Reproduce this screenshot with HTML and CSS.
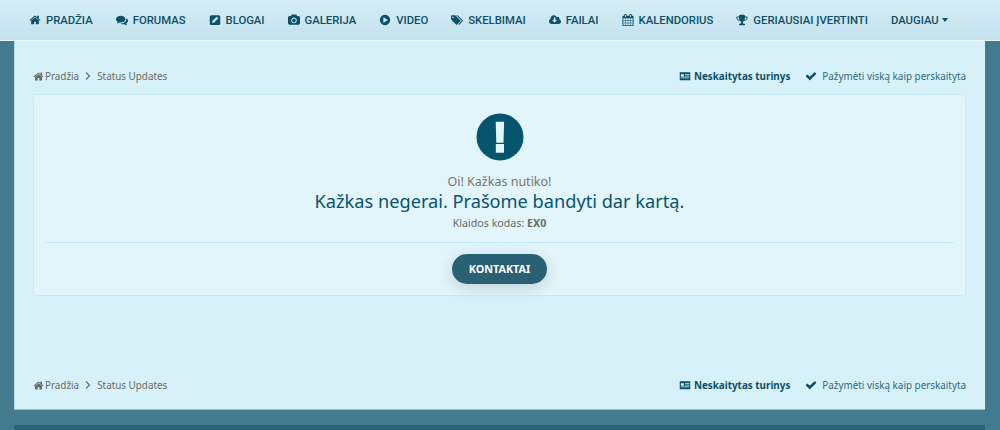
FILE: index.html
```html
<!DOCTYPE html>
<html lang="lt">
<head>
    <meta charset="UTF-8">
    <meta name="viewport" content="width=device-width, initial-scale=1.0">
    <title>Status Updates</title>
    <link rel="stylesheet" href="styles.css">
</head>
<body>

<!-- Main navigation -->
<nav class="nav-bar">
    <a class="nav-item"><svg class="nav-icon" viewBox="0 0 1792 1792"><path d="M1472 992v480q0 26-19 45t-45 19h-384v-384h-256v384h-384q-26 0-45-19t-19-45v-480q0-1 .5-3t.5-3l575-474 575 474q1 2 1 6zm223-69l-62 74q-8 9-21 11h-3q-13 0-21-7l-692-577-692 577q-12 8-24 7-13-2-21-11l-62-74q-8-10-7-23.5t11-21.5l719-599q32-26 76-26t76 26l244 204v-195q0-14 9-23t23-9h192q14 0 23 9t9 23v408l219 182q10 8 11 21.5t-7 23.5z"/></svg>Pradžia</a>
    <a class="nav-item"><svg class="nav-icon" viewBox="0 0 1792 1792"><path d="M1408 768q0 139-94 257t-256.5 186.5-353.5 68.5q-86 0-176-16-124 88-278 128-36 9-86 16h-3q-11 0-20.5-8t-11.5-21q-1-3-1-6.500t.5-6.500 2-6l2.500-5 3.500-5.500 4-5 4.500-5 4-4.500q5-6 23-25t26-29.500 22.500-29 25-38.500 20.500-44q-124-72-195-177t-71-224q0-139 94-257t256.500-186.500 353.500-68.500 353.500 68.500 256.500 186.500 94 257zm384 256q0 120-71 224.500t-195 176.500q10 24 20.500 44t25 38.500 22.500 29 26 29.500 23 25q1 1 4 4.500t4.500 5 4 5 3.500 5.500l2.500 5 2 6 .5 6.500-1 6.500q-3 14-13 22t-22 7q-50-7-86-16-154-40-278-128-90 16-176 16-271 0-472-132 58 4 88 4 161 0 309-45t264-129q125-92 192-212t67-254q0-77-23-152 129 71 204 178t75 230z"/></svg>Forumas</a>
    <a class="nav-item"><svg class="nav-icon" viewBox="0 0 16 16"><path fill-rule="evenodd" d="M3 1.5h10a2 2 0 0 1 2 2v9a2 2 0 0 1-2 2H3a2 2 0 0 1-2-2v-9a2 2 0 0 1 2-2zM4 12l3-.7 5.500-5.500-2.300-2.300L4.700 9z"/></svg>Blogai</a>
    <a class="nav-item"><svg class="nav-icon" viewBox="0 0 1920 1792"><path d="M960 672q119 0 203.500 84.500t84.500 203.500-84.500 203.500-203.500 84.500-203.500-84.500-84.500-203.500 84.500-203.500 203.500-84.500zm704-416q106 0 181 75t75 181v896q0 106-75 181t-181 75h-1408q-106 0-181-75t-75-181v-896q0-106 75-181t181-75h224l51-136q19-49 69.500-84.500t103.500-35.500h512q53 0 103.500 35.500t69.500 84.500l51 136h224zm-704 1152q185 0 316.500-131.500t131.500-316.500-131.500-316.500-316.500-131.500-316.500 131.500-131.500 316.500 131.500 316.500 316.500 131.500z"/></svg>Galerija</a>
    <a class="nav-item"><svg class="nav-icon" viewBox="0 0 1792 1792"><path d="M896 128q209 0 385.500 103t279.500 279.500 103 385.500-103 385.500-279.500 279.500-385.500 103-385.500-103-279.500-279.500-103-385.500 103-385.500 279.500-279.500 385.500-103zm384 823q32-18 32-55t-32-55l-544-320q-31-19-64-1-32 19-32 56v640q0 37 32 56 16 8 32 8 17 0 32-9z"/></svg>Video</a>
    <a class="nav-item"><svg class="nav-icon" viewBox="0 0 1920 1792"><path d="M448 448q0-53-37.500-90.500t-90.500-37.500-90.500 37.500-37.500 90.500 37.500 90.500 90.500 37.500 90.500-37.500 37.500-90.500zm1067 576q0 53-37 90l-491 492q-39 37-91 37-53 0-90-37l-715-716q-38-37-64.500-101t-26.500-117v-416q0-52 38-90t90-38h416q53 0 117 26.500t102 64.500l715 714q37 39 37 91zm384 0q0 53-37 90l-491 492q-39 37-91 37-36 0-59-14t-53-45l470-470q37-37 37-90 0-52-37-91l-715-714q-38-38-102-64.500t-117-26.500h224q53 0 117 26.500t102 64.500l715 714q37 39 37 91z"/></svg>Skelbimai</a>
    <a class="nav-item"><svg class="nav-icon" viewBox="0 0 1920 1792"><path d="M1280 928q0-14-9-23t-23-9h-224v-352q0-13-9.500-22.500t-22.500-9.500h-192q-13 0-22.500 9.500t-9.500 22.500v352h-224q-13 0-22.500 9.500t-9.500 22.500q0 14 9 23l352 352q9 9 23 9t23-9l351-351q10-12 10-24zm640 224q0 159-112.500 271.500t-271.500 112.500h-1088q-185 0-316.500-131.500t-131.500-316.500q0-130 70-240t188-165q-2-30-2-43 0-212 150-362t362-150q156 0 285.500 87t188.500 231q71-62 166-62 106 0 181 75t75 181q0 76-41 138 130 31 213.500 135.500t83.500 238.500z"/></svg>Failai</a>
    <a class="nav-item"><svg class="nav-icon" viewBox="0 0 1792 1792"><path d="M192 1664h288v-288h-288v288zm352 0h320v-288h-320v288zm-352-352h288v-320h-288v320zm352 0h320v-320h-320v320zm-352-384h288v-288h-288v288zm736 736h320v-288h-320v288zm-384-736h320v-288h-320v288zm768 736h288v-288h-288v288zm-384-352h320v-320h-320v320zm-352-864v-288q0-13-9.500-22.500t-22.500-9.500h-64q-13 0-22.500 9.500t-9.500 22.500v288q0 13 9.500 22.500t22.500 9.500h64q13 0 22.500-9.500t9.500-22.500zm736 864h288v-320h-288v320zm-384-384h320v-288h-320v288zm384 0h288v-288h-288v288zm32-480v-288q0-13-9.500-22.500t-22.500-9.500h-64q-13 0-22.500 9.500t-9.500 22.500v288q0 13 9.500 22.500t22.500 9.500h64q13 0 22.500-9.500t9.500-22.500zm384-64v1280q0 52-38 90t-90 38h-1408q-52 0-90-38t-38-90v-1280q0-52 38-90t90-38h128v-96q0-66 47-113t113-47h64q66 0 113 47t47 113v96h384v-96q0-66 47-113t113-47h64q66 0 113 47t47 113v96h128q52 0 90 38t38 90z"/></svg>Kalendorius</a>
    <a class="nav-item"><svg class="nav-icon" viewBox="0 0 1792 1792"><path d="M522 883q-74-162-74-371h-256v96q0 78 94.500 162t235.500 113zm1078-275v-96h-256q0 209-74 371 141-29 235.500-113t94.500-162zm128-128v128q0 71-41.500 143t-112 130-173 97.500-215.500 44.500q-42 54-95 95-38 34-52.500 72.500t-14.500 89.500q0 54 30.500 91t97.500 37q75 0 133.500 45.500t58.500 114.500v64q0 14-9 23t-23 9h-832q-14 0-23-9t-9-23v-64q0-69 58.500-114.500t133.500-45.500q67 0 97.500-37t30.500-91q0-51-14.500-89.500t-52.500-72.500q-53-41-95-95-113-5-215.500-44.500t-173-97.500-112-130-41.500-143v-128q0-40 28-68t68-28h288v-96q0-66 47-113t113-47h576q66 0 113 47t47 113v96h288q40 0 68 28t28 68z"/></svg>Geriausiai įvertinti</a>
    <a class="nav-item">Daugiau<span class="caret"></span></a>
</nav>

<div class="page">
    <div class="crumbs">
        <div class="crumb-left">
            <svg class="crumb-icon" viewBox="0 0 1792 1792"><path d="M1472 992v480q0 26-19 45t-45 19h-384v-384h-256v384h-384q-26 0-45-19t-19-45v-480q0-1 .5-3t.5-3l575-474 575 474q1 2 1 6zm223-69l-62 74q-8 9-21 11h-3q-13 0-21-7l-692-577-692 577q-12 8-24 7-13-2-21-11l-62-74q-8-10-7-23.5t11-21.5l719-599q32-26 76-26t76 26l244 204v-195q0-14 9-23t23-9h192q14 0 23 9t9 23v408l219 182q10 8 11 21.5t-7 23.5z"/></svg>
            <span>Pradžia</span>
            <svg class="crumb-sep" viewBox="0 0 8 10"><path d="M2 1.500l3.500 3.500L2 8.500" fill="none" stroke="currentColor" stroke-width="1.200"/></svg>
            <span>Status Updates</span>
        </div>
        <div class="crumb-right">
            <a class="unread"><svg class="side-icon" viewBox="0 0 16 16"><path fill-rule="evenodd" d="M1 3h14v10.500H1zm1.500 2.500v3.500h4V5.500zm5.500 0V6.500h6v-1zm0 2V8.500h6v-1zM2.500 10v1h11v-1z"/></svg>Neskaitytas turinys</a>
            <a class="mark"><svg class="side-icon" viewBox="0 0 1792 1792"><path d="M1671 566q0 40-28 68l-724 724-136 136q-28 28-68 28t-68-28l-136-136-362-362q-28-28-28-68t28-68l136-136q28-28 68-28t68 28l294 295 656-657q28-28 68-28t68 28l136 136q28 28 28 68z"/></svg>Pažymėti viską kaip perskaityta</a>
        </div>
    </div>

    <div class="error-box">
        <svg class="error-icon" viewBox="0 0 48 48"><circle cx="24" cy="24" r="23.5"/><path d="M19.700 8.700h8.400l-.6 21h-7.200zM19.800 31h8.200v8.700h-8.200z" fill="#e2f5fb"/></svg>
        <p class="error-lead">Oi! Kažkas nutiko!</p>
        <h1 class="error-title">Kažkas negerai. Prašome bandyti dar kartą.</h1>
        <p class="error-code">Klaidos kodas: <strong>EX0</strong></p>
        <div class="error-actions">
            <a class="contact-btn">Kontaktai</a>
        </div>
    </div>

    <div class="crumbs crumbs-bottom">
        <div class="crumb-left">
            <svg class="crumb-icon" viewBox="0 0 1792 1792"><path d="M1472 992v480q0 26-19 45t-45 19h-384v-384h-256v384h-384q-26 0-45-19t-19-45v-480q0-1 .5-3t.5-3l575-474 575 474q1 2 1 6zm223-69l-62 74q-8 9-21 11h-3q-13 0-21-7l-692-577-692 577q-12 8-24 7-13-2-21-11l-62-74q-8-10-7-23.5t11-21.5l719-599q32-26 76-26t76 26l244 204v-195q0-14 9-23t23-9h192q14 0 23 9t9 23v408l219 182q10 8 11 21.5t-7 23.5z"/></svg>
            <span>Pradžia</span>
            <svg class="crumb-sep" viewBox="0 0 8 10"><path d="M2 1.500l3.500 3.500L2 8.500" fill="none" stroke="currentColor" stroke-width="1.200"/></svg>
            <span>Status Updates</span>
        </div>
        <div class="crumb-right">
            <a class="unread"><svg class="side-icon" viewBox="0 0 16 16"><path fill-rule="evenodd" d="M1 3h14v10.500H1zm1.500 2.500v3.500h4V5.500zm5.500 0V6.500h6v-1zm0 2V8.500h6v-1zM2.500 10v1h11v-1z"/></svg>Neskaitytas turinys</a>
            <a class="mark"><svg class="side-icon" viewBox="0 0 1792 1792"><path d="M1671 566q0 40-28 68l-724 724-136 136q-28 28-68 28t-68-28l-136-136-362-362q-28-28-28-68t28-68l136-136q28-28 68-28t68 28l294 295 656-657q28-28 68-28t68 28l136 136q28 28 28 68z"/></svg>Pažymėti viską kaip perskaityta</a>
        </div>
    </div>
</div>

<div class="footer-bar"></div>

</body>
</html>
```

FILE: styles.css
```css
html, body {
    height: 430px;
    overflow: hidden;
}
body {
    font-family: "Noto Sans", sans-serif;
    font-size: 9.87px;
    margin: 0;
    background-color: #437b8e;
    color: #6a6a64;
}
.nav-bar {
    display: flex;
    align-items: center;
    gap: 23px;
    height: 40px;
    padding-left: 29px;
    background: linear-gradient(#d6edf5, #c2e2ee);
    border-bottom: 1px solid #eaf7fb;
}
.nav-item {
    display: flex;
    align-items: center;
    font-family: Roboto, sans-serif;
    font-size: 11.3px;
    font-weight: 500;
    white-space: nowrap;
    text-transform: uppercase;
    color: #0d5068;
}
.nav-icon {
    width: 12px;
    height: 12px;
    margin-right: 5px;
    fill: #0d5068;
}
.caret {
    margin-left: 3px;
    border-top: 4px solid #0d5068;
    border-left: 3.5px solid transparent;
    border-right: 3.5px solid transparent;
}
.page {
    width: 971px;
    height: 369px;
    margin-left: 14px;
    padding: 0 19px 0 18px;
    box-sizing: border-box;
    background-color: #d7f1f9;
    border-left: 1px solid #b5dbe6;
    border-bottom: 1px solid #8fbccb;
}
.crumbs {
    display: flex;
    justify-content: space-between;
    align-items: center;
    height: 18px;
    padding-top: 26px;
    margin-bottom: 9px;
}
.crumbs-bottom {
    padding-top: 80px;
    margin-bottom: 0;
}
.crumb-left,
.crumb-right {
    display: flex;
    align-items: center;
}
.crumb-icon {
    width: 11px;
    height: 11px;
    margin-right: 1px;
    fill: #6a6a64;
}
.crumb-sep {
    width: 8px;
    height: 10px;
    margin: 0 5px;
    color: #6a6a64;
}
.crumb-right a {
    display: flex;
    align-items: center;
    color: #0d5068;
}
.side-icon {
    width: 12px;
    height: 12px;
    margin-right: 5px;
    fill: #0d5068;
}
.unread {
    font-weight: 700;
    margin-right: 15px;
}
.unread .side-icon {
    margin-right: 3px;
}
.crumb-right .mark {
    color: #2f6a80;
}
.error-box {
    height: 202px;
    padding: 18px 11px 0;
    box-sizing: border-box;
    background-color: #e2f5fb;
    border: 1px solid #c8ebf8;
    border-radius: 3px;
    text-align: center;
}
.error-icon {
    display: block;
    width: 48px;
    height: 48px;
    margin: 0 auto 12px;
    fill: #07546e;
}
.error-lead {
    margin: 0;
    font-size: 12.5px;
    line-height: 18px;
    color: #75756d;
}
.error-title {
    margin: -1px 0 0;
    font-size: 18.2px;
    font-weight: 400;
    line-height: 22px;
    color: #07546e;
}
.error-code {
    margin: 1px 0 0;
    font-size: 10.66px;
    line-height: 20px;
}
.error-actions {
    margin-top: 9px;
    padding-top: 11px;
    border-top: 1px solid #c8ebf8;
}
.contact-btn {
    display: inline-block;
    height: 30px;
    line-height: 30px;
    padding: 0 17px;
    border-radius: 15px;
    background-color: #2a6074;
    box-shadow: 0 4px 16px rgba(0, 0, 0, 0.15);
    color: #fff;
    font-size: 10.8px;
    font-weight: 700;
    text-transform: uppercase;
}
.footer-bar {
    width: 971px;
    height: 10px;
    margin: 15px 0 0 14px;
    background-color: #2a6478;
}
```
